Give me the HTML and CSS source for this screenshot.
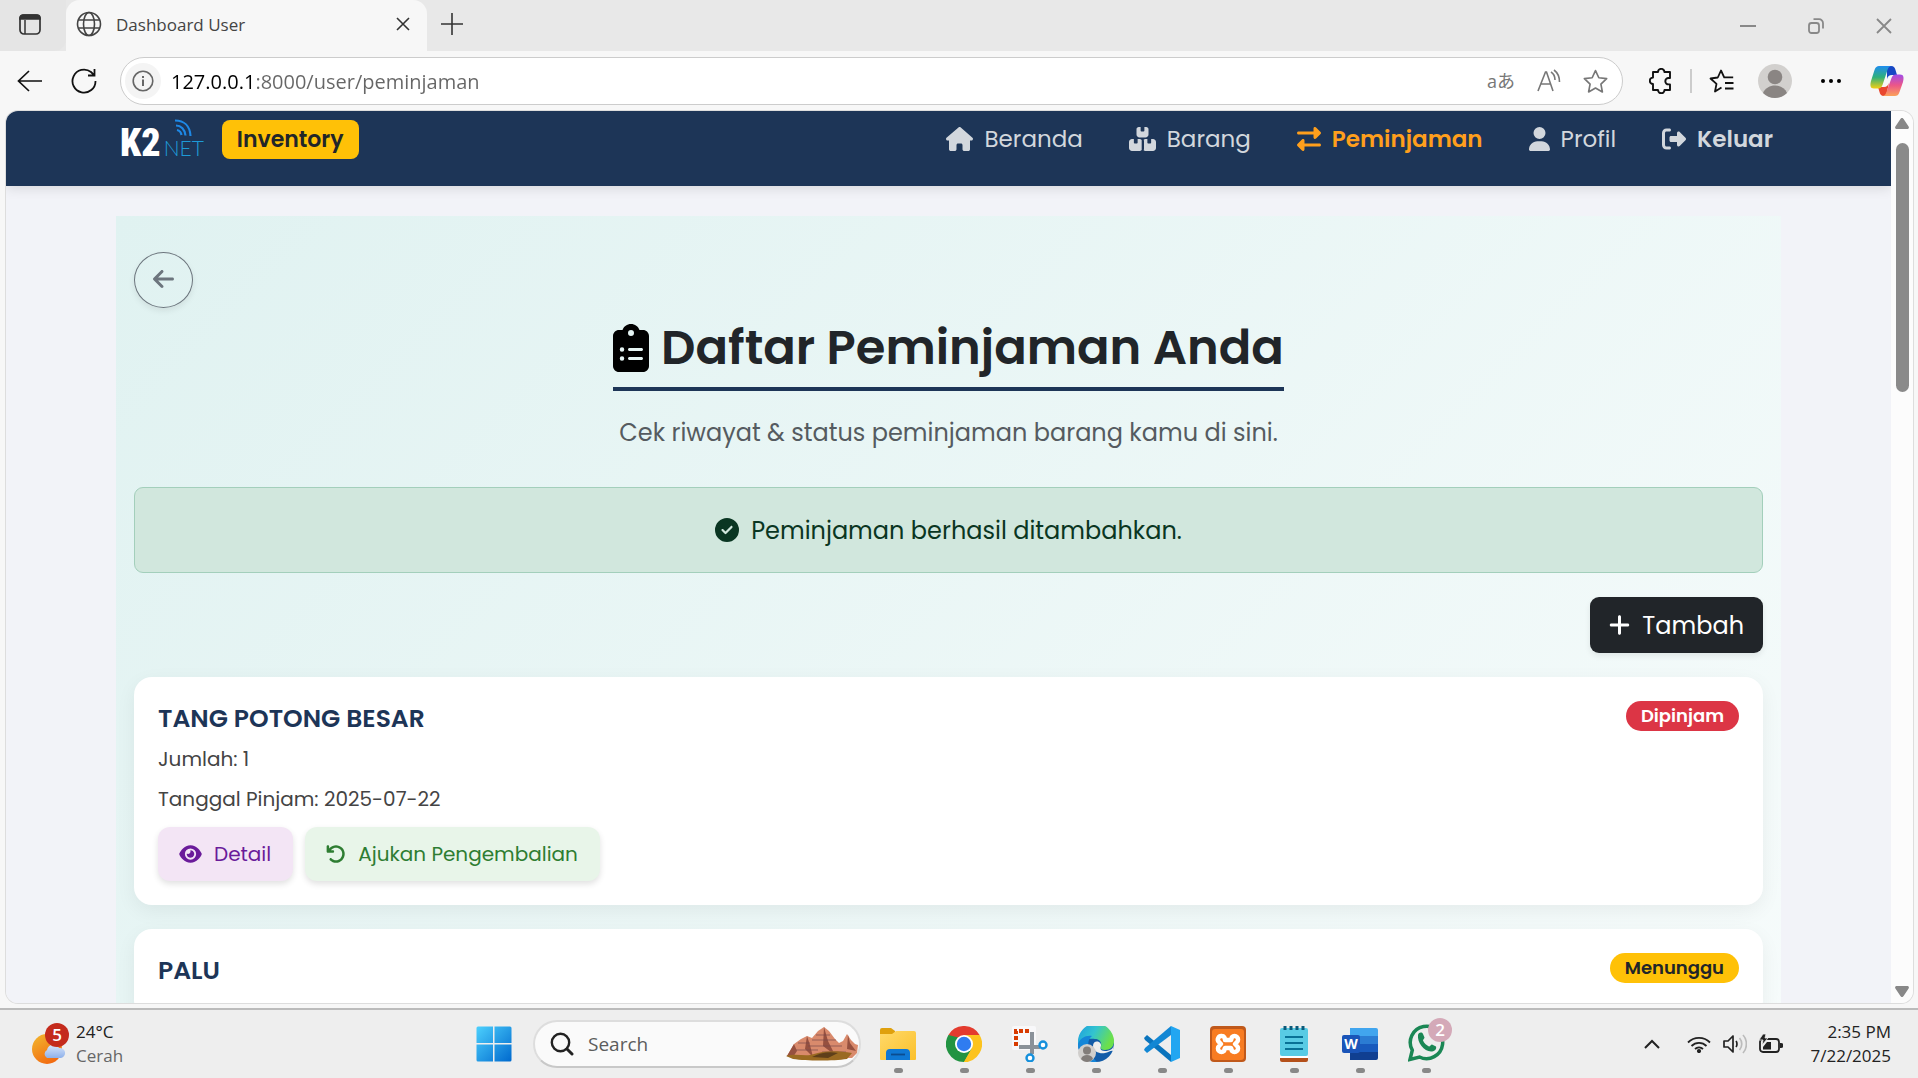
FILE: index.html
```html
<!DOCTYPE html>
<html lang="id">
<head>
<meta charset="utf-8">
<meta name="viewport" content="width=device-width, initial-scale=1">
<title>Dashboard User</title>
<link rel="stylesheet" href="styles.css">
</head>
<body>
<div class="desktop">
  <header class="tabstrip">
    <button class="tab-actions" aria-label="Tab actions">
      <svg width="24" height="24" viewBox="0 0 24 24" fill="none" stroke="#333" stroke-width="1.700"><rect x="2" y="3" width="20" height="19" rx="4"/><path d="M2 7V6a3 3 0 0 1 3-3h14a3 3 0 0 1 3 3v1z" fill="#333"/><path d="M7 8v14" stroke-width="1.500"/></svg>
    </button>
    <div class="tab">
      <svg width="26" height="26" viewBox="0 0 26 26" fill="none" stroke="#444" stroke-width="1.600"><circle cx="13" cy="13" r="11.500"/><ellipse cx="13" cy="13" rx="5.500" ry="11.500"/><path d="M2.500 9h21M2.500 17h21"/></svg>
      <span class="tab-title">Dashboard User</span>
      <button class="icon-button tab-close" aria-label="Close tab"><svg width="14" height="14" viewBox="0 0 14 14" stroke="#333" stroke-width="1.600"><path d="M1 1l12 12M13 1L1 13"/></svg></button>
    </div>
    <button class="icon-button new-tab" aria-label="New tab"><svg width="22" height="22" viewBox="0 0 22 22" stroke="#333" stroke-width="1.600"><path d="M11 0v22M0 11h22"/></svg></button>
    <div class="window-buttons">
      <button class="icon-button" aria-label="Minimize"><svg width="16" height="16" viewBox="0 0 16 16" stroke="#888" stroke-width="2"><path d="M0 8h16"/></svg></button>
      <button class="icon-button" aria-label="Restore"><svg width="16" height="16" viewBox="0 0 16 16" fill="none" stroke="#888" stroke-width="1.800"><rect x="1" y="5" width="10" height="10" rx="2.500"/><path d="M5.500 1.200H11a4 4 0 0 1 4 4v5.300"/></svg></button>
      <button class="icon-button" aria-label="Close"><svg width="16" height="16" viewBox="0 0 16 16" stroke="#888" stroke-width="1.800"><path d="M1 1l14 14M15 1L1 15"/></svg></button>
    </div>
  </header>

  <div class="toolbar">
    <button class="icon-button" aria-label="Back"><svg width="26" height="24" viewBox="0 0 26 24" fill="none" stroke="#111" stroke-width="1.700"><path d="M25 12H2M12 2L1.500 12 12 22"/></svg></button>
    <button class="icon-button reload" aria-label="Reload"><svg width="26" height="26" viewBox="0 0 26 26" fill="none" stroke="#111" stroke-width="1.800"><path d="M24.500 13A11.500 11.500 0 1 1 20 4l3 3M23.500 1v6.500H17"/></svg></button>
    <div class="address">
      <span class="site-info"><svg width="22" height="22" viewBox="0 0 22 22" fill="none" stroke="#666" stroke-width="1.600"><circle cx="11" cy="11" r="9.800"/><path d="M11 9.500V16M11 6v2" stroke-width="2"/></svg></span>
      <input class="url" type="text" value="127.0.0.1:8000/user/peminjaman" aria-label="Address">
      <div class="address-tools">
        <span class="translate">aあ</span>
        <svg width="24" height="24" viewBox="0 0 24 24" fill="none" stroke="#777" stroke-width="1.600"><path d="M1 22L8.500 3h1L16 22M4 15h10M14 3c3 2 4 5 4 8M17 1c4 3 5.500 7 5.500 12"/></svg>
        <svg width="25" height="25" viewBox="0 0 24 24" fill="none" stroke="#777" stroke-width="1.600" stroke-linejoin="round"><path d="M12 1.500l3.200 6.900 7.500.9-5.500 5.200 1.400 7.500-6.600-3.700L5.400 22l1.400-7.500L1.300 9.300l7.500-.9z"/></svg>
      </div>
    </div>
    <div class="browser-tools">
      <button class="icon-button" aria-label="Extensions"><svg width="24" height="26" viewBox="0 0 24 26" fill="none" stroke="#111" stroke-width="1.900" stroke-linejoin="round"><path d="M4 4h5a3.200 3.200 0 0 1 6.400 0H21v6h-1.500a3.200 3.200 0 0 0 0 6.400H21V22h-5.500a3.200 3.200 0 0 1-6.500 0H4v-6a3.200 3.200 0 0 1 0-6.400z"/></svg></button>
      <span class="divider"></span>
      <button class="icon-button" aria-label="Favorites"><svg width="25" height="24" viewBox="0 0 25 24" fill="none" stroke="#111" stroke-width="1.800" stroke-linejoin="round"><path d="M12.500 18.500L6 22.500l1.500-7.600L1.500 9.500l7.300-1L12 1.500l3.200 6.800h9M16 14h8.500M16 19.500h8.500"/></svg></button>
      <button class="icon-button" aria-label="Profile"><svg width="34" height="34" viewBox="0 0 34 34"><circle cx="17" cy="17" r="17" fill="#d2d0ce"/><circle cx="17" cy="13" r="7.300" fill="#8a8583"/><path d="M5 29c2-5 7-7.500 12-7.500S27 24 29 29a17 17 0 0 1-24 0z" fill="#8a8583"/></svg></button>
      <button class="icon-button more" aria-label="Settings"><svg width="20" height="6" viewBox="0 0 20 6"><circle cx="2" cy="3" r="2"/><circle cx="10" cy="3" r="2"/><circle cx="18" cy="3" r="2"/></svg></button>
      <button class="icon-button" aria-label="Copilot"><svg width="34" height="32" viewBox="0 0 34 32"><defs><linearGradient id="cpA" x1="0" y1="0" x2="0" y2="1"><stop offset="0" stop-color="#1f8df0"/><stop offset=".5" stop-color="#2fb07a"/><stop offset="1" stop-color="#f3cf12"/></linearGradient><linearGradient id="cpB" x1="0" y1="0" x2="0" y2="1"><stop offset="0" stop-color="#a04be8"/><stop offset=".5" stop-color="#ec5688"/><stop offset="1" stop-color="#fba25a"/></linearGradient></defs><path d="M17 1h4c3 0 4 2 4.500 4l1.500 5h-5c-3 0-4 1-5 4z" fill="#1747c4"/><path d="M8 22h6c3 0 4-2 5-4l-3 13h-2c-3 0-4-2-4.500-4z" fill="#e9472f"/><path d="M9 1h12c-3 1-3.500 4-4.500 7l-4 12c-1 2.500-2 3.500-4.500 3.500H4C0 23.500 0 20 1 16L4.500 5C5.500 2 7 1 9 1z" fill="url(#cpA)"/><path d="M25 31H13c3-1 3.500-4 4.500-7l4-11c1-2.500 2-3.500 4.500-3.500h4c4 0 4 3.500 3 7.500L29.500 27c-1 3-2.500 4-4.500 4z" fill="url(#cpB)"/></svg></button>
    </div>
  </div>

  <div class="viewport">
    <div class="page">
      <nav class="navbar">
        <div class="brand">
          <a class="logo" href="#" aria-label="K2NET"><span class="logo-k2">K2</span><span class="logo-net">NET</span><svg class="logo-waves" width="18" height="18" viewBox="0 0 18 18" fill="none" stroke="#1e88e5" stroke-width="2.200"><path d="M1 1.500C10 1.500 16 7 16.500 17M2 6.500c5 0 9 4 9.500 10M3 11c2.500.5 4 2 4.500 5"/></svg></a>
          <span class="brand-badge">Inventory</span>
        </div>
        <div class="nav-links">
          <a href="#"><svg width="27" height="24" viewBox="0 0 576 512"><path d="M575.8 255.500c0 18-15 32.100-32 32.100l-32 0 .7 160.200c0 2.700-.2 5.400-.5 8.100l0 16.200c0 22.100-17.900 40-40 40l-16 0c-1.100 0-2.200 0-3.300-.1c-1.400 .1-2.800 .1-4.200 .1L416 512l-24 0c-22.100 0-40-17.900-40-40l0-24 0-64c0-17.700-14.300-32-32-32l-64 0c-17.700 0-32 14.300-32 32l0 64 0 24c0 22.100-17.900 40-40 40l-24 0-31.900 0c-1.500 0-3-.1-4.500-.2c-1.200 .1-2.400 .2-3.600 .2l-16 0c-22.100 0-40-17.900-40-40l0-112c0-.9 0-1.900 .1-2.800l0-69.700-32 0c-18 0-32-14-32-32.100c0-9 3-17 10-24L266.400 8c7-7 15-8 22-8s15 2 21 7L564.800 231.500c8 7 12 15 11 24z"/></svg>Beranda</a>
          <a href="#"><svg width="27" height="24" viewBox="0 0 576 512"><path d="M248 0L208 0c-26.500 0-48 21.500-48 48l0 112c0 35.300 28.700 64 64 64l128 0c35.300 0 64-28.700 64-64l0-112c0-26.500-21.500-48-48-48L328 0l0 80c0 8.800-7.200 16-16 16l-48 0c-8.800 0-16-7.200-16-16l0-80zM64 256c-35.300 0-64 28.700-64 64v128c0 35.300 28.700 64 64 64h160c18.400 0 35-7.800 46.700-20.300V276.300C259 263.800 242.400 256 224 256h-40v80c0 8.800-7.200 16-16 16h-48c-8.800 0-16-7.200-16-16v-80zM352 512h160c35.300 0 64-28.700 64-64V320c0-35.300-28.700-64-64-64h-40v80c0 8.800-7.200 16-16 16h-48c-8.800 0-16-7.200-16-16v-80h-40c-15 0-28.800 5.100-39.700 13.800c4.900 10.400 7.700 22 7.700 34.200v160c0 12.200-2.800 23.800-7.700 34.200C323.200 506.900 337 512 352 512z"/></svg>Barang</a>
          <a class="active" href="#"><svg width="24" height="24" viewBox="0 0 512 512"><path d="M32 96l320 0 0-64c0-12.900 7.800-24.600 19.800-29.600s25.700-2.200 34.900 6.900l96 96c6 6 9.400 14.100 9.400 22.600s-3.400 16.600-9.400 22.600l-96 96c-9.200 9.200-22.900 11.900-34.900 6.900s-19.800-16.600-19.800-29.600l0-64L32 160c-17.700 0-32-14.300-32-32s14.300-32 32-32zM480 352c17.700 0 32 14.300 32 32s-14.300 32-32 32l-320 0 0 64c0 12.900-7.800 24.600-19.800 29.600s-25.700 2.200-34.900-6.900l-96-96c-6-6-9.400-14.100-9.400-22.600s3.400-16.600 9.400-22.600l96-96c9.200-9.200 22.900-11.900 34.900-6.900s19.800 16.600 19.800 29.600l0 64 320 0z"/></svg>Peminjaman</a>
          <a href="#"><svg width="21" height="24" viewBox="0 0 448 512"><path d="M224 256A128 128 0 1 0 224 0a128 128 0 1 0 0 256zm-45.700 48C79.800 304 0 383.800 0 482.300C0 498.700 13.300 512 29.700 512l388.600 0c16.400 0 29.700-13.300 29.700-29.700C448 383.800 368.200 304 269.700 304l-91.400 0z"/></svg>Profil</a>
          <a class="logout" href="#"><svg width="24" height="24" viewBox="0 0 512 512"><path d="M377.900 105.900L500.700 228.700c7.200 7.200 11.300 17.100 11.300 27.300s-4.100 20.100-11.300 27.300L377.900 406.100c-6.400 6.400-15 9.900-24 9.900c-18.700 0-33.900-15.200-33.900-33.900l0-62.100-128 0c-17.700 0-32-14.300-32-32l0-64c0-17.700 14.300-32 32-32l128 0 0-62.100c0-18.700 15.200-33.900 33.900-33.900c9 0 17.600 3.600 24 9.900zM160 96L96 96c-17.700 0-32 14.300-32 32l0 256c0 17.700 14.300 32 32 32l64 0c17.700 0 32 14.300 32 32s-14.300 32-32 32l-64 0c-53 0-96-43-96-96L0 128C0 75 43 32 96 32l64 0c17.700 0 32 14.300 32 32s-14.300 32-32 32z"/></svg>Keluar</a>
        </div>
      </nav>

      <main class="content">
        <button class="back" aria-label="Kembali"><svg width="21" height="24" viewBox="0 0 448 512" fill="currentColor"><path d="M9.400 233.400c-12.500 12.500-12.500 32.800 0 45.300l160 160c12.500 12.500 32.800 12.500 45.300 0s12.500-32.800 0-45.300L109.200 288 416 288c17.700 0 32-14.300 32-32s-14.300-32-32-32l-306.700 0L214.600 118.600c12.500-12.500 12.500-32.800 0-45.300s-32.800-12.500-45.300 0l-160 160z"/></svg></button>
        <div class="heading">
          <h1><svg width="36" height="48" viewBox="0 0 384 512"><path d="M192 0c-41.800 0-77.400 26.700-90.500 64L64 64C28.700 64 0 92.700 0 128L0 448c0 35.300 28.700 64 64 64l256 0c35.300 0 64-28.700 64-64l0-320c0-35.300-28.700-64-64-64l-37.500 0C269.400 26.700 233.800 0 192 0zm0 64a32 32 0 1 1 0 64 32 32 0 1 1 0-64zM72 272a24 24 0 1 1 48 0 24 24 0 1 1 -48 0zm104-16l128 0c8.800 0 16 7.200 16 16s-7.200 16-16 16l-128 0c-8.800 0-16-7.200-16-16s7.200-16 16-16zM72 368a24 24 0 1 1 48 0 24 24 0 1 1 -48 0zm88 0c0-8.800 7.200-16 16-16l128 0c8.800 0 16 7.200 16 16s-7.200 16-16 16l-128 0c-8.800 0-16-7.200-16-16z"/></svg>Daftar Peminjaman Anda</h1>
          <p>Cek riwayat &amp; status peminjaman barang kamu di sini.</p>
        </div>
        <div class="alert" role="status"><svg width="24" height="24" viewBox="0 0 512 512" fill="currentColor"><path d="M256 512A256 256 0 1 0 256 0a256 256 0 1 0 0 512zM369 209L241 337c-9.400 9.400-24.600 9.400-33.900 0l-64-64c-9.400-9.400-9.400-24.600 0-33.900s24.600-9.400 33.900 0l47 47L335 175c9.400-9.400 24.600-9.400 33.900 0s9.400 24.600 0 33.900z"/></svg>Peminjaman berhasil ditambahkan.</div>
        <button class="add"><svg width="21" height="24" viewBox="0 0 448 512" fill="currentColor"><path d="M256 80c0-17.700-14.300-32-32-32s-32 14.300-32 32l0 144L48 224c-17.700 0-32 14.300-32 32s14.300 32 32 32l144 0 0 144c0 17.700 14.300 32 32 32s32-14.300 32-32l0-144 144 0c17.700 0 32-14.300 32-32s-14.300-32-32-32l-144 0 0-144z"/></svg>Tambah</button>

        <article class="card">
          <div class="card-info">
            <h2>TANG POTONG BESAR</h2>
            <p>Jumlah: 1</p>
            <p>Tanggal Pinjam: 2025-07-22</p>
            <div class="card-actions">
              <button class="action detail"><svg width="23" height="20" viewBox="0 0 576 512" fill="currentColor"><path d="M288 32c-80.800 0-145.500 36.800-192.600 80.600C48.600 156 17.300 208 2.500 243.700c-3.300 7.900-3.300 16.700 0 24.600C17.300 304 48.600 356 95.400 399.400C142.500 443.200 207.200 480 288 480s145.500-36.800 192.600-80.600c46.800-43.500 78.100-95.400 93-131.100c3.300-7.900 3.300-16.700 0-24.600c-14.900-35.700-46.200-87.700-93-131.100C433.500 68.800 368.800 32 288 32zM144 256a144 144 0 1 1 288 0 144 144 0 1 1 -288 0zm144-64c0 35.300-28.700 64-64 64c-7.100 0-13.900-1.200-20.300-3.300c-5.500-1.800-11.900 1.600-11.700 7.400c.3 6.900 1.300 13.800 3.200 20.700c13.700 51.200 66.400 81.600 117.600 67.900s81.600-66.400 67.900-117.600c-11.100-41.500-47.800-69.400-88.600-71.100c-5.800-.2-9.200 6.100-7.400 11.700c2.100 6.400 3.300 13.200 3.300 20.300z"/></svg>Detail</button>
              <button class="action return"><svg width="20" height="20" viewBox="0 0 512 512" fill="currentColor"><path d="M125.700 160l50.300 0c17.700 0 32 14.300 32 32s-14.300 32-32 32L48 224c-17.700 0-32-14.300-32-32L16 64c0-17.700 14.300-32 32-32s32 14.300 32 32l0 51.200L97.600 97.600c87.500-87.500 229.300-87.500 316.800 0s87.500 229.300 0 316.800s-229.300 87.500-316.800 0c-12.500-12.500-12.500-32.800 0-45.300s32.800-12.500 45.300 0c62.500 62.500 163.800 62.500 226.300 0s62.500-163.800 0-226.300s-163.800-62.500-226.300 0L125.700 160z"/></svg>Ajukan Pengembalian</button>
            </div>
          </div>
          <span class="status borrowed">Dipinjam</span>
        </article>
        <article class="card">
          <div class="card-info"><h2>PALU</h2></div>
          <span class="status waiting">Menunggu</span>
        </article>
      </main>
    </div>
    <div class="scrollbar" aria-hidden="true">
      <svg width="14" height="11" viewBox="0 0 14 11" fill="#888"><path d="M7 0c.8 0 1.200.5 1.600 1L13.600 8.500c.8 1.200 0 2.500-1.200 2.500H1.600C.4 11-.4 9.700.4 8.500L5.400 1C5.800.5 6.200 0 7 0z"/></svg>
      <span class="track"><span class="thumb"></span></span>
      <svg width="14" height="11" viewBox="0 0 14 11" fill="#888"><path d="M7 11c.8 0 1.200-.5 1.600-1L13.600 2.500C14.400 1.300 13.600 0 12.400 0H1.600C.4 0-.4 1.300.4 2.500L5.400 10c.4.500.8 1 1.600 1z"/></svg>
    </div>
  </div>

  <footer class="taskbar">
    <button class="weather">
      <svg width="40" height="44" viewBox="0 0 40 44"><defs><linearGradient id="sun" x1="0" y1="0" x2=".6" y2="1"><stop offset="0" stop-color="#f2b92f"/><stop offset="1" stop-color="#f26a10"/></linearGradient><linearGradient id="cloud" x1="0" y1="0" x2="0" y2="1"><stop offset="0" stop-color="#d8e6fb"/><stop offset="1" stop-color="#8fb1ea"/></linearGradient></defs><circle cx="16" cy="27" r="15" fill="url(#sun)"/><path d="M16 36a4.500 4.500 0 0 1 0-8 6.500 6.500 0 0 1 12-2 5 5 0 0 1 2 10z" fill="url(#cloud)"/><circle cx="26" cy="13" r="12" fill="#c42b1c"/><text x="26" y="19" text-anchor="middle" class="badge-text">5</text></svg>
      <span class="weather-text"><span>24°C</span><span class="muted">Cerah</span></span>
    </button>
    <div class="apps">
      <button class="app start" aria-label="Start"><svg width="36" height="36" viewBox="0 0 36 36"><defs><linearGradient id="win" x1="0" y1="0" x2="1" y2="1"><stop offset="0" stop-color="#4cd0fd"/><stop offset="1" stop-color="#0069ce"/></linearGradient></defs><path fill="url(#win)" d="M2 .5h15v16.500H.5V2A1.500 1.500 0 0 1 2 .5zM18.500.5H34A1.500 1.500 0 0 1 35.500 2v15h-17zM.5 18.500H17v17H2A1.500 1.500 0 0 1 .5 34zM18.500 18.500h17V34a1.500 1.500 0 0 1-1.500 1.500H18.500z"/></svg></button>
      <label class="search">
        <svg width="24" height="24" viewBox="0 0 24 24" fill="none" stroke="#222" stroke-width="2.400" stroke-linecap="round"><circle cx="10.500" cy="10.500" r="8.700"/><path d="M17 17l5 5" stroke-width="3"/></svg>
        <input type="text" placeholder="Search" aria-label="Search">
        <svg width="72" height="36" viewBox="0 0 72 36"><path d="M1 30l7-12 7-5 6-3 5 2 6-7 6-4 5 4 6 8 4 4 4-2 4-7 4 6 4 4 3 1-1 8-5 5H8z" fill="#d98a6c"/><path d="M21 10l3 9 3 12-8-8zM38 1l4 14 7 14-12-9zM62 9l2 8 6 8-9-2zM8 18l3 7-4 6-6-1z" fill="#96503f"/><path d="M30 9l14 0M26 14l24 0M12 17h12M22 20h34M10 24h22M36 26h24" stroke="#7b4a4c" stroke-width="1.200" opacity=".7"/><path d="M0 30c10-3 20 1 28-2s22-4 38-1l-5 6c-14 2-40 2-54 0z" fill="#9a6a22"/><path d="M26 31c8-4 16-6 26-4l-10 5z" fill="#5f3f1a"/></svg>
      </label>
      <button class="app open" aria-label="File Explorer"><svg width="36" height="36" viewBox="0 0 36 36"><defs><linearGradient id="fold" x1="0" y1="0" x2="1" y2="1"><stop offset="0" stop-color="#ffd96a"/><stop offset="1" stop-color="#fbc02a"/></linearGradient></defs><path d="M0 4a2 2 0 0 1 2-2h9l4 3v6H0z" fill="#dfa00d"/><path d="M0 8h12l4-3h18a2 2 0 0 1 2 2v26a1 1 0 0 1-1 1H1a1 1 0 0 1-1-1z" fill="url(#fold)"/><path d="M6 34V27a4 4 0 0 1 4-4h16a4 4 0 0 1 4 4v7z" fill="#0f78d4"/><path d="M11 28.500h14" stroke="#0b4c8f" stroke-width="1.800"/></svg></button>
      <button class="app open" aria-label="Chrome"><svg width="36" height="36" viewBox="0 0 36 36"><path d="M18 18L2.400 9A18 18 0 0 1 33.600 9z" fill="#e33b2e"/><path d="M18 18L33.600 9A18 18 0 0 1 18 36z" fill="#fcc31e"/><path d="M18 18v18A18 18 0 0 1 2.400 9z" fill="#229342"/><path d="M18 9h15.600L26 18z" fill="#fcc31e"/><path d="M10.200 22.500L2.400 9l12 3zM25.800 22.500L18 36l-3-9z" fill="#229342"/><path d="M25.800 22.500L18 36h4L34 18l-8-6z" fill="#fcc31e"/><circle cx="18" cy="18" r="9" fill="#fff"/><circle cx="18" cy="18" r="7.200" fill="#2f7cf0"/></svg></button>
      <button class="app open" aria-label="Snipping Tool"><svg width="36" height="36" viewBox="0 0 36 36"><rect x="0" y="0" width="24" height="24" rx="2" fill="#f8f8fa"/><path d="M4 20V5h14" fill="none" stroke="#d83b01" stroke-width="4" stroke-dasharray="4 2"/><path d="M20 6v22M7 21h21" stroke="#8a9199" stroke-width="4" fill="none"/><circle cx="31" cy="19" r="3.500" fill="#fff" stroke="#1590dc" stroke-width="2.400"/><circle cx="18" cy="32" r="3.500" fill="#fff" stroke="#1590dc" stroke-width="2.400"/></svg></button>
      <button class="app open" aria-label="Edge"><svg width="36" height="36" viewBox="0 0 36 36"><defs><linearGradient id="edge" x1="0" y1="0" x2="1" y2=".4"><stop offset="0" stop-color="#1c9ce0"/><stop offset=".5" stop-color="#33c4cf"/><stop offset="1" stop-color="#6ce04a"/></linearGradient></defs><circle cx="18" cy="18" r="18" fill="#135ca8"/><path d="M0 16A18 18 0 0 1 36 15c0 6-4 9-9 9s-5-2-4-4c1-3-1-7-6-7C10 12 3 14 0 21z" fill="url(#edge)"/><path d="M0 18C2 12 8 9 14 10c-4 3-5 9-2 16 1 4 4 7 7 10C8 37 0 29 0 18z" fill="#1586d8"/><path d="M15 20c0 6 7 8 12 7 3 0 6-3 8-2l1 1c-1-4 0-7 0-9 0 6-4 8-9 8s-5-3-4-5c1-5-8-7-8 0z" fill="#eee"/><circle cx="9" cy="27" r="9" fill="#d0cecc"/><circle cx="9" cy="24.500" r="4" fill="#827d7a"/><path d="M3 33c1-3 3-4 6-4s5 1 6 4c-3 4-9 4-12 0z" fill="#827d7a"/></svg></button>
      <button class="app open" aria-label="Visual Studio Code"><svg width="36" height="36" viewBox="0 0 36 36"><path d="M0 12l3-3 24 20v7L1 14z" fill="#0a74bd"/><path d="M0 24l3 3L27 9V0L1 22z" fill="#1287d4"/><path d="M27 0l9 4v28l-9 4z" fill="#22a6f1"/></svg></button>
      <button class="app open" aria-label="XAMPP"><svg width="36" height="36" viewBox="0 0 36 36"><rect width="36" height="36" rx="4" fill="#c0591b"/><rect x="2" y="3" width="32" height="31" rx="3" fill="#f87c22"/><path d="M12 10a3.500 3.500 0 0 0-3 6l2 2-2 2a3.500 3.500 0 1 0 5 5l1-3h6l1 3a3.500 3.500 0 1 0 5-5l-2-2 2-2a3.500 3.500 0 1 0-5-5l-1 3h-6c0-2-1-4-3-4z" fill="none" stroke="#fff" stroke-width="4.500" stroke-linejoin="round"/></svg></button>
      <button class="app open" aria-label="Notepad"><svg width="36" height="36" viewBox="0 0 36 36"><path d="M4 31h28v3a2 2 0 0 1-2 2H6a2 2 0 0 1-2-2z" fill="#b4501a"/><path d="M4 30h28v2H4z" fill="#fff"/><rect x="4" y="2" width="28" height="28" rx="2" fill="#58cbe4"/><path d="M9 11h18M9 17h18M9 23h18" stroke="#087196" stroke-width="2"/><path d="M9 0v4M15 0v4M21 0v4M27 0v4" stroke="#0b5a7a" stroke-width="3"/></svg></button>
      <button class="app open" aria-label="Word"><svg width="36" height="36" viewBox="0 0 36 36"><path d="M8 2h26a2 2 0 0 1 2 2v6H8z" fill="#41a5ee"/><path d="M8 10h28v8H8z" fill="#2b7cd3"/><path d="M8 18h28v8H8z" fill="#185abd"/><path d="M8 26h28v6a2 2 0 0 1-2 2H8z" fill="#103f91"/><rect y="9" width="18" height="18" rx="2" fill="#1a54b8"/><text x="9" y="23" text-anchor="middle" class="word-letter">W</text></svg></button>
      <button class="app open" aria-label="WhatsApp"><svg class="whatsapp" width="44" height="44" viewBox="0 0 44 44"><path d="M2 41.500l2.300-9.300A16.200 16.200 0 1 1 11.500 39z" fill="none" stroke="#1b8755" stroke-width="3.500"/><path d="M10 17c1-3 4-3 5-1l1.500 3.500c0 1-1.500 2-1.500 3 1 3 4 5 6 6 1 0 2-2 3-2l4 2c1 3-2 5-5 5-7 0-14-9-13-16.500z" fill="#1b8755"/><circle cx="32" cy="12" r="12" fill="#d4a9b8"/><text x="32" y="18" text-anchor="middle" class="badge-text">2</text></svg></button>
    </div>
    <div class="tray">
      <svg width="16" height="10" viewBox="0 0 16 10" fill="none" stroke="#222" stroke-width="2"><path d="M1 9l7-7 7 7"/></svg>
      <div class="tray-icons">
        <svg width="24" height="18" viewBox="0 0 24 18" fill="none" stroke="#222" stroke-width="1.800"><path d="M1 7.500a15.500 15.500 0 0 1 22 0M4.500 11a10.500 10.500 0 0 1 15 0M8 14a6 6 0 0 1 8 0"/><circle cx="12" cy="16" r="1.200" fill="#222"/></svg>
        <svg width="24" height="20" viewBox="0 0 24 20" fill="none" stroke="#222" stroke-width="1.700"><path d="M1 7h4l5-5v16l-5-5H1z" stroke-linejoin="round"/><path d="M13 7c1.300 1.500 1.300 4.500 0 6"/><path d="M16.500 4c3 3.500 3 8.500 0 12M20 1c4.500 5 4.500 13 0 18" stroke="#bbb"/></svg>
        <svg width="24" height="20" viewBox="0 0 24 20"><rect x="1" y="5" width="19" height="13" rx="3" fill="none" stroke="#222" stroke-width="1.800"/><path d="M21 9h1a2 2 0 0 1 0 5h-1zM4 15.500V13l4-5h4v7.500z" fill="#222"/><path d="M4 0h3L6 4h3L3 11l1-5H0z" fill="#222" stroke="#eee" stroke-width=".8"/></svg>
      </div>
      <div class="clock"><span>2:35 PM</span><span>7/22/2025</span></div>
    </div>
  </footer>
</div>
</body>
</html>
```
FILE: styles.css
```css
:root {
  --page-font: Poppins, Inter, sans-serif;
  --system-font: "Segoe UI", "Open Sans", "Noto Sans", "Noto Sans CJK JP", sans-serif;
  --navy: #1d3557;
}

* { box-sizing: border-box; }

body { margin: 0; font-family: var(--system-font); color: #212529; }
h1, h2, p { margin: 0; }
svg { display: block; flex-shrink: 0; }
button { border: 0; padding: 0; background: none; font-family: inherit; color: inherit; }
input { border: 0; padding: 0; outline: 0; background: none; min-width: 0; font-family: inherit; }
a { color: inherit; text-decoration: none; }

.desktop { display: flex; flex-direction: column; height: 100vh; overflow: hidden; background: #f7f7f7; }
.icon-button { display: grid; place-items: center; }

/* Browser tabs */
.tabstrip { display: flex; align-items: stretch; height: 51px; flex-shrink: 0; background: #e8e8e8; }
.tab-actions { display: grid; place-items: center; width: 66px; padding-right: 6px; padding-bottom: 3px; background: #e5e5e5; border-bottom-right-radius: 12px; }
.tab { display: flex; align-items: center; gap: 14px; width: 361px; padding: 0 17px 3px 10px; background: #f7f7f7; border-radius: 14px 14px 0 0; }
.tab-title { flex: 1; font-size: 17px; color: #444; }
.new-tab { width: 50px; padding-bottom: 4px; }
.window-buttons { display: flex; margin-left: auto; }
.window-buttons .icon-button { width: 68px; }

/* Browser toolbar */
.toolbar { display: flex; align-items: center; height: 60px; flex-shrink: 0; padding: 0 14px 0 17px; }
.reload { margin: 0 23px 0 28px; }
.address { display: flex; flex: 1; align-items: center; height: 48px; padding: 0 14px 0 4px; border: 1px solid #ccc; border-radius: 24px; background: #fff; }
.site-info { display: grid; place-items: center; width: 36px; height: 36px; border-radius: 50%; background: #f4f4f4; }
.url { flex: 1; margin-left: 10px; font-size: 20px; color: transparent; background: linear-gradient(90deg, #000 83px, #666 83px); -webkit-background-clip: text; background-clip: text; }
.address-tools { display: flex; align-items: center; gap: 22px; color: #777; }
.translate { font-size: 18px; line-height: 24px; }
.browser-tools { display: flex; align-items: center; gap: 24px; padding-left: 26px; }
.divider { width: 2px; height: 24px; margin: 0 -7px; background: #ccc; }
.more { margin: 0 5px; }

/* Page viewport */
.viewport { display: flex; flex: 1; min-height: 0; margin: 0 5px 5px 6px; overflow: hidden; border-radius: 12px; box-shadow: 0 0 0 1px #ddd; }
.page { flex: 1; overflow: hidden; background: #f2f3f8; font-family: var(--page-font); }
.scrollbar { display: flex; flex-direction: column; align-items: center; gap: 14px; width: 22px; padding: 7px 0 6px; background: #fcfcfc; }
.track { flex: 1; }
.thumb { display: block; width: 13px; height: 30%; border-radius: 7px; background: #8a8a8a; }

.navbar { position: relative; display: flex; align-items: center; justify-content: space-between; height: 75px; padding: 0 118px 19px 114px; background: var(--navy); box-shadow: 0 2px 12px rgba(0, 0, 0, .12); }
.brand { display: flex; align-items: center; gap: 18px; }
.logo { position: relative; display: flex; align-items: baseline; gap: 3px; height: 40px; line-height: 48px; }
.logo-k2 { font-family: "Liberation Sans Narrow", "Roboto Condensed", Roboto, sans-serif; font-weight: 900; font-size: 38px; color: #fff; }
.logo-net { font-family: Lato, sans-serif; font-weight: 300; font-size: 21px; color: #1e9bd8; }
.logo-waves { position: absolute; top: 0; right: 12px; }
.brand-badge { padding: 0 15px; border-radius: 8px; background: #ffc107; color: #212529; font-size: 22px; line-height: 39px; font-weight: 600; }
.nav-links { display: flex; gap: 46px; font-size: 23px; line-height: 36px; color: #d2d7dd; }
.nav-links a { display: flex; align-items: center; gap: 11px; }
.nav-links svg { fill: currentColor; }
.nav-links .active { color: #ff9f1c; font-weight: 600; }
.nav-links .logout { font-weight: 600; }

.content { display: flex; flex-direction: column; gap: 24px; margin: 30px 110px 0; padding: 36px 18px 1000px; background: linear-gradient(135deg, #e0f2f1, #fff); }
.back { display: grid; place-items: center; width: 59px; height: 56px; padding-bottom: 3px; border: 1px solid #6c757d; border-radius: 50%; color: #6c757d; box-shadow: 0 3px 6px rgba(0, 0, 0, .08); }
.heading { display: flex; flex-direction: column; align-items: center; gap: 24px; margin: -12px 0 12px; }
.heading h1 { display: flex; align-items: center; gap: 12px; padding-bottom: 11px; border-bottom: 4px solid var(--navy); font-size: 48px; line-height: 56px; font-weight: 600; }
.heading h1 svg { fill: #000; }
.heading p { font-size: 24px; line-height: 36px; color: #555b60; }
.alert { display: flex; align-items: center; justify-content: center; gap: 12px; height: 86px; border: 1px solid #a3cfbb; border-radius: 9px; background: #d1e7dd; color: #0a3622; font-size: 24px; }
.add { display: flex; align-items: center; align-self: flex-end; gap: 12px; height: 56px; padding: 0 19px; border-radius: 9px; background: #212529; color: #fff; font-size: 24px; box-shadow: 0 3px 6px rgba(0, 0, 0, .08); }

.card { display: flex; justify-content: space-between; align-items: flex-start; padding: 24px; border-radius: 18px; background: #fff; box-shadow: 0 6px 20px rgba(0, 0, 0, .06); }
.card-info { display: flex; flex-direction: column; }
.card h2 { margin-bottom: 5px; font-size: 25px; line-height: 36px; font-weight: 600; color: var(--navy); }
.card p { margin-bottom: 6px; font-size: 20px; line-height: 34px; color: #444; }
.card-actions { display: flex; gap: 12px; margin-top: 5px; }
.action { display: flex; align-items: center; gap: 12px; height: 54px; padding: 0 22px 0 21px; border-radius: 12px; font-size: 20px; box-shadow: 0 3px 6px rgba(0, 0, 0, .12); }
.detail { background: #f3e5f5; color: #6a1b9a; }
.return { background: #e8f5e9; color: #2e7d32; }
.status { padding: 0 15px; border-radius: 15px; font-size: 18px; line-height: 30px; font-weight: 600; }
.borrowed { background: #dc3545; color: #fff; }
.waiting { background: #ffc107; color: #212529; }

/* Taskbar */
.taskbar { display: grid; grid-template-columns: 1fr auto 1fr; align-items: center; height: 70px; flex-shrink: 0; padding-left: 2px; border-top: 2px solid #bbb; background: #eee; }
.weather { display: flex; align-items: center; gap: 5px; padding-left: 29px; justify-self: start; text-align: left; }
.weather-text, .clock { display: flex; flex-direction: column; font-size: 17px; line-height: 24px; color: #222; }
.weather-text .muted { color: #666; }
.badge-text { font: 600 17px var(--system-font); fill: #fff; }
.word-letter { font: 700 14px var(--system-font); fill: #fff; }
.apps { display: flex; align-items: center; }
.app { position: relative; display: grid; place-items: center; width: 66px; height: 68px; }
.app.open::after { content: ""; position: absolute; bottom: 5px; left: 29px; width: 9px; height: 5px; border-radius: 3px; background: #888; }
.whatsapp { margin: -8px 0 0 8px; }
.search { display: flex; align-items: center; width: 328px; height: 48px; margin: 0 4px 0 6px; padding: 0 1px 0 15px; border: 2px solid #ddd; border-bottom-color: #c8c8c8; border-radius: 24px; background: #fafafa; }
.search input { flex: 1; margin-left: 14px; font-size: 19px; color: #333; }
.search input::placeholder { color: #5c5c5c; opacity: 1; }
.tray { display: flex; align-items: center; justify-self: end; gap: 27px; padding-right: 27px; }
.tray-icons { display: flex; align-items: center; gap: 12px; }
.clock { text-align: right; }
```
